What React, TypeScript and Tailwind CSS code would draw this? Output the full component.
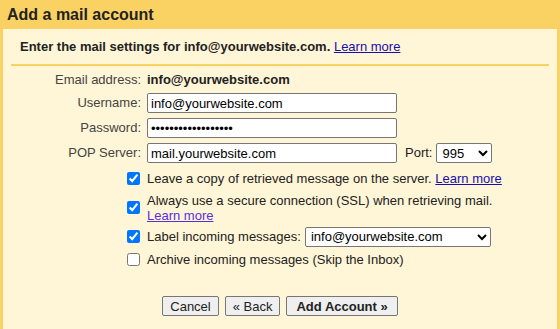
import React from 'react';

const inputCls =
  'h-5 w-[250px] rounded-[2px] border border-[#767676] bg-white px-[3px] text-[13px] text-black outline-none';

function Row({ label, h = 'h-[25px]', children }: { label: string; h?: string; children: React.ReactNode }) {
  return (
    <div className={`flex ${h} items-center`}>
      <div className="w-[138px] text-right text-[#444]">{label}</div>
      <div className="ml-[6px] flex items-center">{children}</div>
    </div>
  );
}

function Check({ checked, className = '', children }: { checked?: boolean; className?: string; children: React.ReactNode }) {
  return (
    <div className={`flex items-center ${className}`}>
      <input
        type="checkbox"
        defaultChecked={checked}
        className="m-0 ml-[124px] h-[13px] w-[13px] shrink-0 accent-[#0075ff]"
      />
      <div className="ml-[7px] w-[360px] leading-[15px] text-[#222]">{children}</div>
    </div>
  );
}

const btnCls = 'h-5 rounded-[2px] border border-[#767676] bg-[#efefef] text-[13px] text-[#222]';

export default function App() {
  return (
    <div
      className="h-[329px] w-[560px] overflow-hidden bg-[#fad163] text-[13px]"
      style={{ fontFamily: '"Liberation Sans", Arial, sans-serif' }}
    >
      <div className="flex h-[29px] items-center pl-[7px] text-[16px] font-bold text-[#222]">
        Add a mail account
      </div>
      <div className="mx-[3px] h-[300px] bg-[#fff5d7] pt-[8px]">
        <div className="mx-[8px] border-b-2 border-[#fad163] pb-[7px] pl-[9px] text-[13px] font-bold text-[#222]">
          Enter the mail settings for info@yourwebsite.com.{' '}
          <a href="#" className="font-normal text-[#1a0dab] underline">Learn more</a>
        </div>

        <div className="mt-[4px]">
          <Row label="Email address:" h="h-[21px]">
            <span className="font-bold text-[#222]">info@yourwebsite.com</span>
          </Row>
          <Row label="Username:">
            <input className={inputCls} defaultValue="info@yourwebsite.com" />
          </Row>
          <Row label="Password:">
            <input type="password" className={inputCls} defaultValue="yourpassword123456" />
          </Row>
          <Row label="POP Server:">
            <input className={inputCls} defaultValue="mail.yourwebsite.com" />
            <span className="ml-[8px] text-[#222]">Port:</span>
            <select className="ml-[4px] h-5 w-[56px] rounded-[2px] border border-[#767676] bg-white pl-px text-[13px] text-black">
              <option>995</option>
              <option>110</option>
            </select>
          </Row>
        </div>

        <div className="mt-[5px] flex flex-col">
          <Check checked>
            Leave a copy of retrieved message on the server.{' '}
            <a href="#" className="text-[#1a0dab] underline">Learn more</a>
          </Check>
          <Check checked className="mt-[7px]">
            Always use a secure connection (SSL) when retrieving mail.{' '}
            <a href="#" className="text-[#5a2ee0] underline">Learn more</a>
          </Check>
          <Check checked className="mt-[4px]">
            <span className="flex items-center">
              Label incoming messages:
              <select className="ml-[4px] h-5 w-[186px] rounded-[2px] border border-[#767676] bg-white pl-px text-[13px] text-black">
                <option>info@yourwebsite.com</option>
              </select>
            </span>
          </Check>
          <Check className="mt-[5px]">Archive incoming messages (Skip the Inbox)</Check>
        </div>

        <div className="mt-[29px] flex justify-center gap-[6px]">
          <button className={`${btnCls} px-[7px]`}>Cancel</button>
          <button className={`${btnCls} px-[7px]`}>« Back</button>
          <button className={`${btnCls} px-[9px] font-bold`}>Add Account »</button>
        </div>
      </div>
    </div>
  );
}
